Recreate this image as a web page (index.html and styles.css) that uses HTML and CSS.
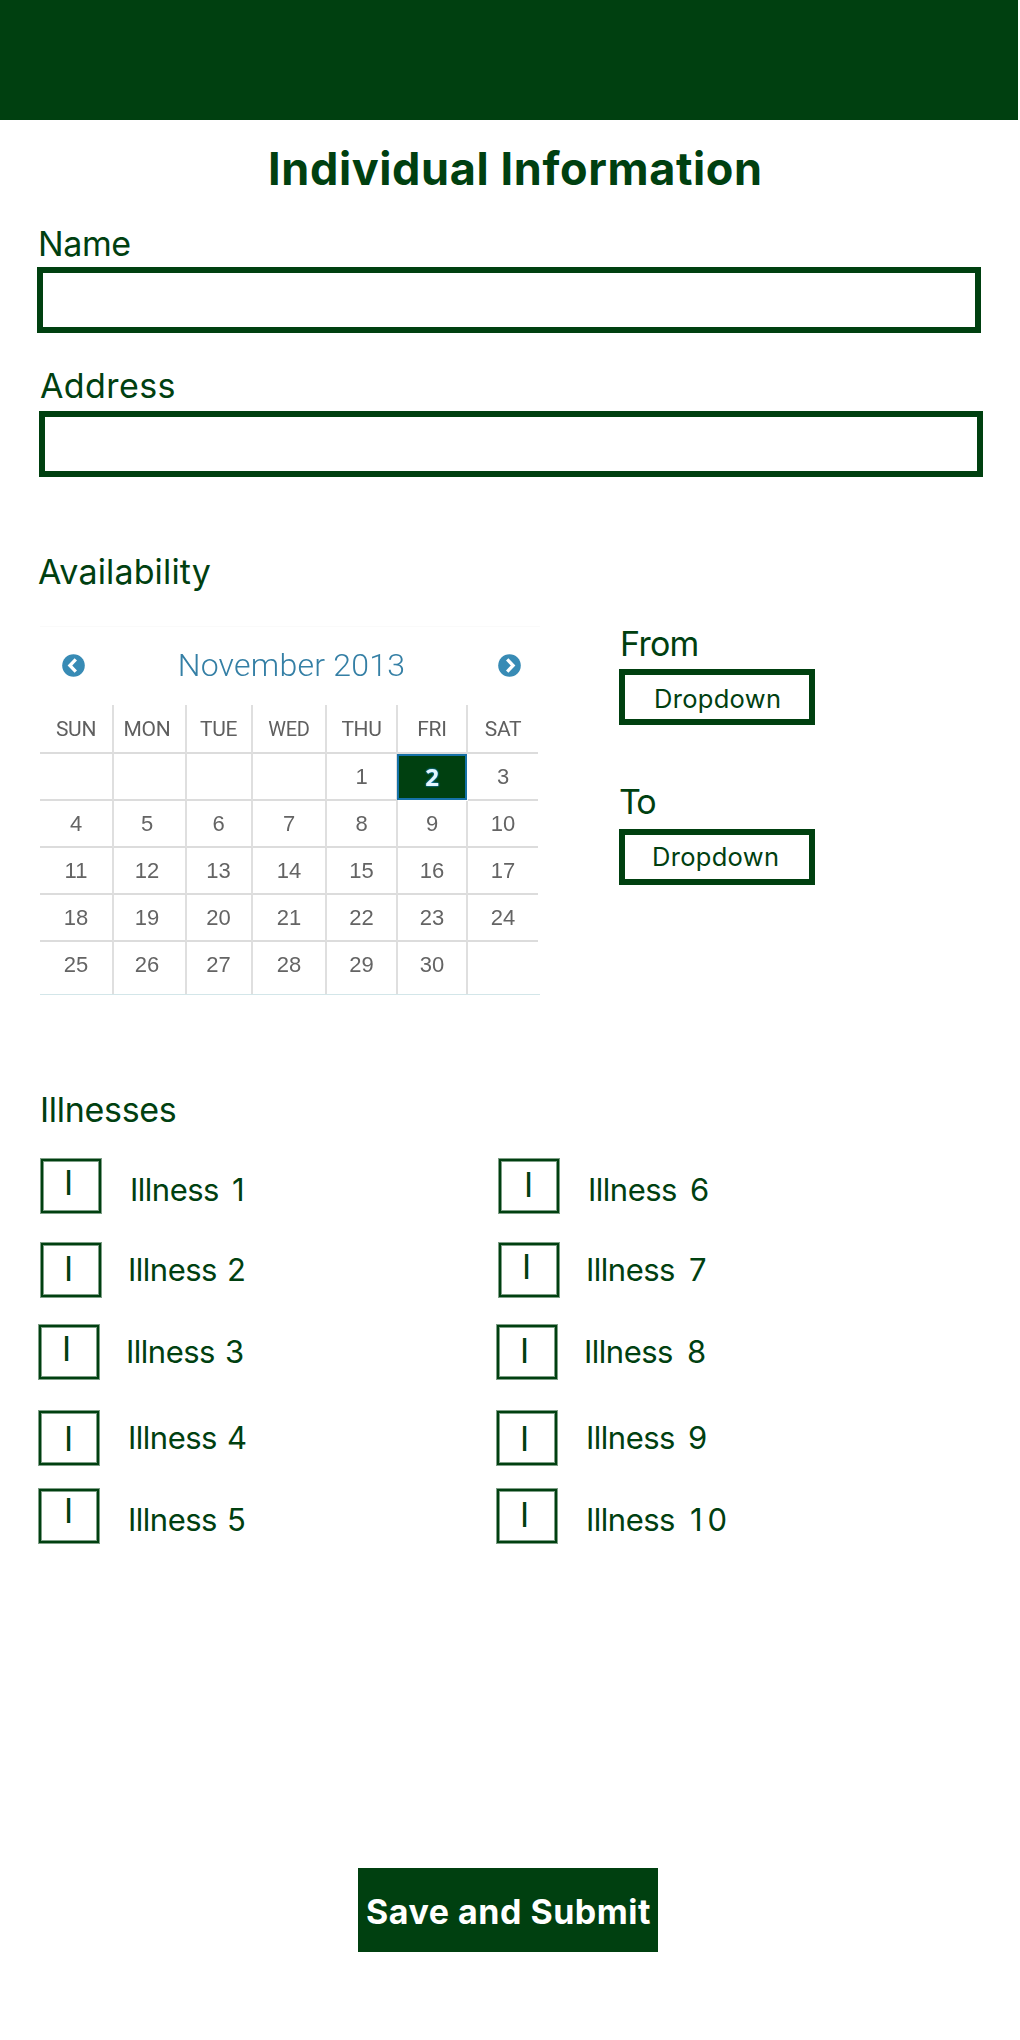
FILE: index.html
```html
<!DOCTYPE html>
<html lang="en">
<head>
<meta charset="utf-8">
<title>Individual Information</title>
<link rel="stylesheet" href="styles.css">
</head>
<body>
<header class="topbar"></header>
<main class="page">
  <h1 class="title">Individual Information</h1>

  <section class="field field-name">
    <div class="label label-name">Name</div>
    <div class="input"></div>
  </section>
  <section class="field field-address">
    <div class="label label-address">Address</div>
    <div class="input"></div>
  </section>

  <h2 class="label availability-title">Availability</h2>
  <section class="availability">
    <div class="calendar">
      <div class="cal-head">
        <svg class="cal-arrow" viewBox="0 0 23 23"><circle cx="11.5" cy="11.5" r="11.3" fill="#388bb5"/><path d="M13.8 5.4 7.9 11.5l5.9 6.1" fill="none" stroke="#fff" stroke-width="3.3"/></svg>
        <span class="cal-month">November 2013</span>
        <svg class="cal-arrow" viewBox="0 0 23 23"><circle cx="11.5" cy="11.5" r="11.3" fill="#388bb5"/><path d="m9.2 5.4 5.9 6.1-5.9 6.1" fill="none" stroke="#fff" stroke-width="3.3"/></svg>
      </div>
      <div class="cal-grid">
        <span class="day">SUN</span><span class="day">MON</span><span class="day">TUE</span><span class="day wed">WED</span><span class="day">THU</span><span class="day">FRI</span><span class="day">SAT</span>
        <span></span><span></span><span></span><span></span><span>1</span><span class="selected">2</span><span>3</span>
        <span>4</span><span>5</span><span>6</span><span>7</span><span>8</span><span>9</span><span>10</span>
        <span>11</span><span>12</span><span>13</span><span>14</span><span>15</span><span>16</span><span>17</span>
        <span>18</span><span>19</span><span>20</span><span>21</span><span>22</span><span>23</span><span>24</span>
        <span class="last">25</span><span class="last">26</span><span class="last">27</span><span class="last">28</span><span class="last">29</span><span class="last">30</span><span class="last"></span>
      </div>
    </div>
    <div class="times">
      <div class="label label-from">From</div>
      <div class="dropdown dropdown-from">Dropdown</div>
      <div class="label label-to">To</div>
      <div class="dropdown dropdown-to">Dropdown</div>
    </div>
  </section>

  <h2 class="label illnesses-title">Illnesses</h2>
  <section class="illnesses">
    <div class="item i1"><span class="box">I</span><span class="name">Illness</span><span class="num">1</span></div>
    <div class="item i6"><span class="box">I</span><span class="name">Illness</span><span class="num">6</span></div>
    <div class="item i2"><span class="box">I</span><span class="name">Illness</span><span class="num">2</span></div>
    <div class="item i7"><span class="box">I</span><span class="name">Illness</span><span class="num">7</span></div>
    <div class="item i3"><span class="box">I</span><span class="name">Illness</span><span class="num">3</span></div>
    <div class="item i8"><span class="box">I</span><span class="name">Illness</span><span class="num">8</span></div>
    <div class="item i4"><span class="box">I</span><span class="name">Illness</span><span class="num">4</span></div>
    <div class="item i9"><span class="box">I</span><span class="name">Illness</span><span class="num">9</span></div>
    <div class="item i5"><span class="box">I</span><span class="name">Illness</span><span class="num">5</span></div>
    <div class="item i10"><span class="box">I</span><span class="name">Illness</span><span class="num">10</span></div>
  </section>

  <button class="submit">Save and Submit</button>
</main>
</body>
</html>
```
FILE: styles.css
```css
* { box-sizing: border-box; }

body {
  margin: 0;
  background: #fff;
  color: #004010;
  font-family: Inter, "Liberation Sans", sans-serif;
}

.topbar { width: 1018px; height: 120px; background: #004010; }

.page { display: flow-root; height: 1920px; }

.title {
  margin: 22px 0 0 268px;
  font-size: 45px;
  line-height: 54px;
  font-weight: 700;
  letter-spacing: 0.62px;
  white-space: nowrap;
}

.label {
  margin: 0;
  font-size: 34px;
  line-height: 40px;
  font-weight: 400;
  white-space: nowrap;
}

/* Text fields */
.field { width: 944px; }
.field-name { margin: 28px 0 0 37px; }
.field-address { margin: 33px 0 0 39px; }
.label-name { margin: 0 0 3px 1px; letter-spacing: -0.4px; }
.label-address { margin: 0 0 5px 1px; letter-spacing: 0.4px; }
.input { height: 66px; border: 6px solid #004010; }

/* Availability */
.availability-title { margin: 75px 0 0 38px; letter-spacing: 0.15px; }
.availability { display: flex; gap: 79px; margin: 32px 0 0 40px; }

.calendar {
  width: 500px;
  height: 369px;
  margin-top: 2px;
  border-top: 1px solid #fafafa;
  border-bottom: 1px solid #d3e6e9;
  color: #646464;
  filter: blur(0.4px);
}
.cal-head {
  display: flex;
  align-items: center;
  justify-content: space-between;
  height: 78px;
  padding: 0 19px 1px 22px;
}
.cal-arrow { width: 23px; height: 23px; }
.cal-month {
  padding-bottom: 2px;
  font: 300 32px/40px Roboto, sans-serif;
  letter-spacing: 0.25px;
  color: #347fa5;
}
.cal-grid {
  display: grid;
  grid-template-columns: 74px 73px 66px 74px 71px 70px 70px;
  grid-template-rows: 49px repeat(4, 47px) 52px;
  width: 498px;
  height: 289px;
  font: 22px/28px "Liberation Sans", Arial, sans-serif;
}
.cal-grid span {
  display: flex;
  align-items: center;
  justify-content: center;
  border-right: 2px solid #dfdfdf;
  border-bottom: 2px solid #dcdcdc;
}
.cal-grid span:nth-child(7n + 2) { padding-right: 5px; }
.cal-grid span:nth-child(7n + 3) { padding-right: 1px; }
.cal-grid span:nth-child(7n) { border-right: 0; }
.cal-grid .day { font: 21px/28px Roboto, sans-serif; letter-spacing: -0.3px; color: #5f5f5f; }
.cal-grid .wed { padding-top: 1px; font-size: 20px; }
.cal-grid .last { border-bottom: 0; padding-bottom: 6px; }
.cal-grid .selected {
  margin: 0 1px 1px -1px;
  border: 2px solid #1672a8;
  background: #004010;
  color: #e4f6ff;
  font: 700 24px/28px "Open Sans", sans-serif;
  text-shadow: 0 0 2px #1683c8, 0 0 2px #1683c8;
}

.times { width: 196px; }
.label-from { margin: 0 0 5px 1px; letter-spacing: -0.7px; }
.label-to { margin: 57px 0 7px 0; letter-spacing: -2px; }
.dropdown {
  height: 56px;
  border: 6px solid #004010;
  font-size: 25.5px;
  line-height: 32px;
  letter-spacing: 0.3px;
}
.dropdown-from { padding: 8px 0 0 29px; }
.dropdown-to { padding: 6px 0 0 27px; }

/* Illnesses */
.illnesses-title { margin: 95px 0 0 40px; letter-spacing: -0.3px; }
.illnesses {
  display: grid;
  grid-template-columns: 458px 400px;
  grid-template-rows: 84px 82px 86px 78px 54px;
  margin: 29px 0 0 39px;
}
.item {
  --box-x: 0px;
  --mark-x: 21px;
  --mark-y: 4px;
  --name-x: 27px;
  --name-y: 7px;
  --num-gap: 10px;
  display: flex;
  align-items: flex-start;
  padding-left: var(--box-x);
}
.box {
  width: 60px;
  height: 54px;
  padding: var(--mark-y) 0 0 var(--mark-x);
  border: 2px solid #004010;
  box-shadow: 0 0 0 1px rgba(0, 64, 16, 0.5), inset 0 0 0 1px rgba(0, 64, 16, 0.5);
  font-size: 34px;
  line-height: 40px;
}
.name, .num { margin-top: var(--name-y); font-size: 31px; line-height: 40px; }
.name { margin-left: var(--name-x); letter-spacing: -0.5px; }
.num { margin-left: var(--num-gap); }

.i1 { --box-x: 2px; --mark-y: 2px; --name-x: 29px; --name-y: 11px; --num-gap: 13px; }
.i2 { --box-x: 2px; }
.i3 { --mark-y: 2px; }
.i4 { --mark-x: 23px; --mark-y: 6px; --name-x: 29px; }
.i5 { --mark-x: 23px; --mark-y: 0px; --name-x: 29px; --name-y: 11px; }
.i6 { --box-x: 2px; --mark-x: 23px; --name-x: 29px; --name-y: 11px; --num-gap: 13px; }
.i7 { --box-x: 2px; --mark-y: 2px; --num-gap: 14px; }
.i8 { --num-gap: 14px; }
.i9 { --mark-y: 6px; --name-x: 29px; --num-gap: 13px; }
.i10 { --name-x: 29px; --name-y: 11px; --num-gap: 15px; }
.i10 .num { letter-spacing: 5px; }

.submit {
  display: block;
  width: 300px;
  height: 84px;
  margin: 325px 0 0 358px;
  padding: 4px 0 0 8px;
  border: 0;
  background: #004010;
  color: #fff;
  font: 700 34px/40px Inter, sans-serif;
  letter-spacing: 0.5px;
  text-align: left;
  white-space: nowrap;
}
```
